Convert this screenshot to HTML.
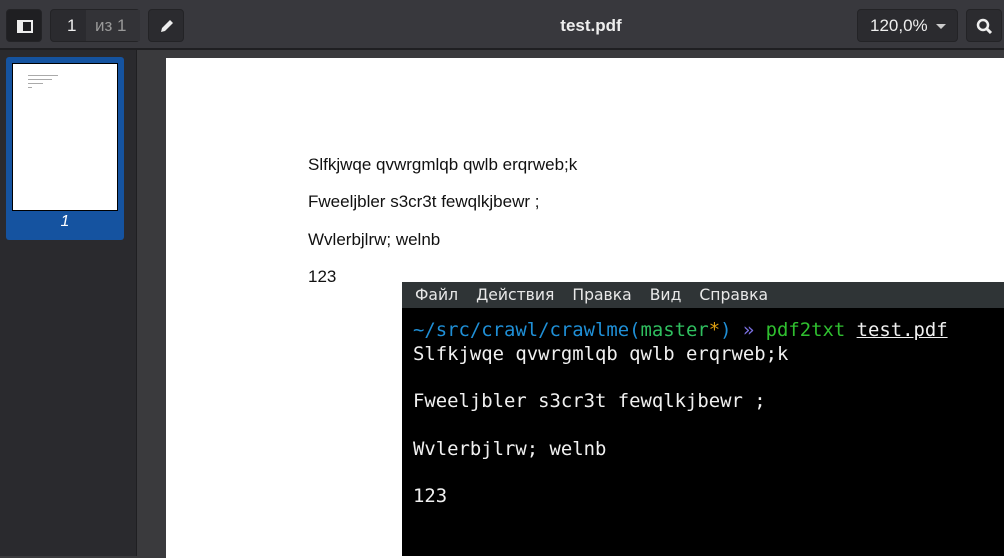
<!DOCTYPE html>
<html><head><meta charset="utf-8"><style>
*{margin:0;padding:0;box-sizing:border-box}
body{width:1004px;height:556px;overflow:hidden;background:#3a3a3d;font-family:"Liberation Sans","DejaVu Sans",sans-serif;position:relative}
.tb{position:absolute;left:0;top:0;width:1004px;height:50px;background:#38383d;border-bottom:2px solid #1f1f22}
.btn{position:absolute;background:#2b2b2f;border-radius:4px;border:1px solid #232326}
.side{position:absolute;left:0;top:50px;width:137px;height:506px;background:#2a2a2e;border-right:1px solid #1f1f22}
.page{position:absolute;left:166px;top:58px;width:840px;height:500px;background:#fff}
.pt{position:absolute;left:308px;font-family:"Liberation Sans",sans-serif;font-size:17px;color:#111}
.term{position:absolute;left:402px;top:282px;width:602px;height:274px;background:#000}
.menu{height:26px;background:#2f3436;color:#e8e8e8;font-family:"DejaVu Sans",sans-serif;font-size:15.6px;line-height:26px;padding-left:13px}
.menu span{margin-right:18px}
.tl{position:absolute;left:11px;font-family:"DejaVu Sans Mono",monospace;font-size:18.9px;color:#f0f0f0;white-space:pre}
</style></head><body>
<div class="tb">
 <div class="btn" style="left:6px;top:9px;width:36px;height:33px;background:#1f1f22"><div style="position:absolute;left:10px;top:10px;width:16px;height:13px;border:2px solid #eee;border-left-width:6px"></div></div>
 <div class="btn" style="left:50px;top:9px;width:90px;height:33px;color:#eee;font-size:17px;line-height:31px"><span style="position:absolute;left:16px">1</span><div style="position:absolute;left:35px;top:0;width:54px;height:31px;background:#333337;color:#999;padding-left:9px">из 1</div></div>
 <div class="btn" style="left:148px;top:9px;width:36px;height:33px"><svg width="36" height="33" viewBox="0 0 36 33"><path d="M12 22 L13 18 L21 10 L24 13 L16 21 Z" fill="#eee"/></svg></div>
 <div style="position:absolute;left:0;width:1182px;top:16px;text-align:center;color:#eee;font-weight:bold;font-size:17px">test.pdf</div>
 <div class="btn" style="left:857px;top:9px;width:101px;height:33px;color:#eee;font-size:17px;line-height:31px;padding-left:12px">120,0%<span style="position:absolute;left:78px;top:14px;border:5px solid transparent;border-top:5px solid #ccc;border-bottom:0"></span></div>
 <div class="btn" style="left:966px;top:9px;width:36px;height:33px"><svg width="36" height="33" viewBox="0 0 36 33"><circle cx="16" cy="15" r="5" stroke="#eee" stroke-width="2.5" fill="none"/><path d="M19.5 18.5 L24 23" stroke="#eee" stroke-width="3"/></svg></div>
</div>
<div class="side">
 <div style="position:absolute;left:6px;top:7px;width:118px;height:183px;background:#1553a0;border-radius:3px">
  <div style="position:absolute;left:6px;top:6px;width:106px;height:148px;background:#fff;border:1px solid #000">
   <div style="position:absolute;left:15px;top:11px;width:30px;height:1px;background:#aaa"></div>
   <div style="position:absolute;left:15px;top:15px;width:24px;height:1px;background:#aaa"></div>
   <div style="position:absolute;left:15px;top:19px;width:15px;height:1px;background:#aaa"></div>
   <div style="position:absolute;left:15px;top:23px;width:4px;height:1px;background:#aaa"></div>
  </div>
  <div style="position:absolute;left:0;width:118px;top:156px;text-align:center;color:#fff;font-style:italic;font-size:16px">1</div>
 </div>
</div>
<div class="page"></div>
<div class="pt" style="top:155px">Slfkjwqe qvwrgmlqb qwlb erqrweb;k</div>
<div class="pt" style="top:192px">Fweeljbler s3cr3t fewqlkjbewr ;</div>
<div class="pt" style="top:230px">Wvlerbjlrw; welnb</div>
<div class="pt" style="top:267px">123</div>
<div class="term">
 <div class="menu"><span>Файл</span><span>Действия</span><span>Правка</span><span>Вид</span><span>Справка</span></div>
 <div class="tl" style="top:37px"><span style="color:#1f8fd6">~/src/crawl/crawlme(</span><span style="color:#2fbf5f">master</span><span style="color:#e0a010">*</span><span style="color:#1f8fd6">)</span> <span style="color:#7a6fe0">»</span> <span style="color:#2fbf2f">pdf2txt</span> <span style="text-decoration:underline">test.pdf</span></div>
 <div class="tl" style="top:61px">Slfkjwqe qvwrgmlqb qwlb erqrweb;k</div>
 <div class="tl" style="top:108px">Fweeljbler s3cr3t fewqlkjbewr ;</div>
 <div class="tl" style="top:156px">Wvlerbjlrw; welnb</div>
 <div class="tl" style="top:203px">123</div>
</div>
</body></html>
